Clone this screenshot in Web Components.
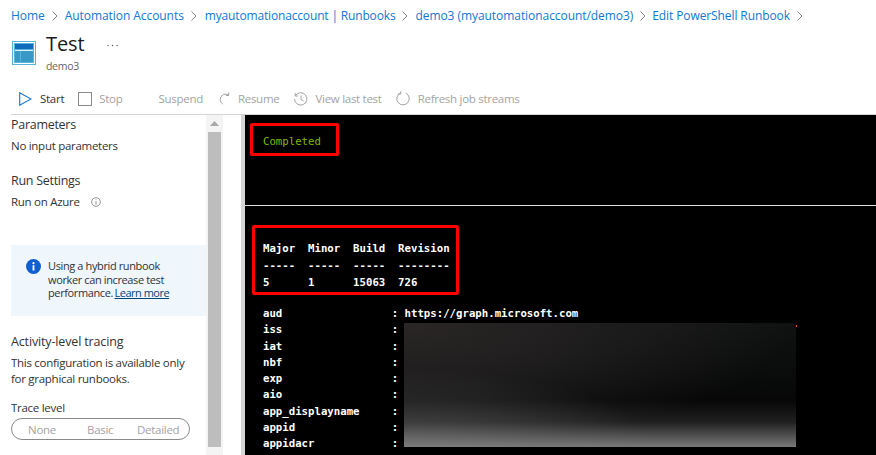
<!DOCTYPE html>
<html><head><meta charset="utf-8"><style>
html,body{margin:0;height:455px;overflow:hidden;background:#fff}
body{font-family:"Open Sans","Noto Sans",sans-serif;display:flex;flex-direction:column}
</style></head><body>
<az-breadcrumb></az-breadcrumb>
<az-title></az-title>
<az-toolbar></az-toolbar>
<div style="display:flex;flex:1;min-height:0">
<az-side></az-side>
<az-term></az-term>
</div>
<script>
const def=(n,h)=>customElements.define(n,class extends HTMLElement{constructor(){super();this.attachShadow({mode:'open'}).innerHTML=h}});
const chev='<svg width="6" height="10" viewBox="0 0 6 10"><path d="M.5.5 5 5 .5 9.5" fill="none" stroke="#777" stroke-width=".9"/></svg>';
def('az-breadcrumb',`<style>:host{display:flex;align-items:center;height:31px;padding-left:11px;box-sizing:border-box;font-size:12px;letter-spacing:-.06px;color:#0f78d4;gap:7px;white-space:nowrap}
.m{letter-spacing:-.16px;margin-left:1px}.e{margin-left:-1px;letter-spacing:-.1px}</style>
<span>Home</span>${chev}<span>Automation Accounts</span>${chev}<span class="m">myautomationaccount | Runbooks</span>${chev}<span>demo3 (myautomationaccount/demo3)</span>${chev}<span class="e">Edit PowerShell Runbook</span>${chev}`);
def('az-title',`<style>:host{display:flex;height:45px;padding-left:12px;box-sizing:border-box;white-space:nowrap}
svg.i{margin:10px 8px 0 0}.t{font-size:20px;line-height:25px;color:#1b1b1b;letter-spacing:-.1px}.s{font-size:10.500px;color:#666;line-height:14px;margin-top:3px;letter-spacing:-.3px}
.d{margin:13px 0 0 22px}</style>
<svg class="i" width="26" height="24" viewBox="0 0 26 24"><rect width="23" height="23" x=".5" y=".5" fill="#fff" stroke="#59b4d9"/><rect x="2" y="2" width="20" height="20" fill="#59b4d9"/><rect x="3" y="3" width="18" height="5" fill="#0f6cbd"/><rect x="3" y="9" width="18" height="1" fill="#fff" opacity=".8"/><rect x="3" y="10" width="5" height="11" fill="#3999c6"/><rect x="9" y="10" width="12" height="11" fill="#3999c6"/></svg>
<div><div class="t">Test</div><div class="s">demo3</div></div>
<svg class="d" width="11" height="3" viewBox="0 0 11 3"><circle cx="1" cy="1.5" r=".7" fill="#555"/><circle cx="5.5" cy="1.5" r=".7" fill="#555"/><circle cx="10" cy="1.5" r=".7" fill="#555"/></svg>`);
def('az-toolbar',`<style>:host{display:flex;align-items:center;height:39px;margin-left:11px;border-bottom:1px solid #d6d6d6;box-sizing:border-box;font-size:11.500px;letter-spacing:-.28px;color:#a3a3a3;white-space:nowrap;padding-top:7px}
span{display:inline-block}svg{flex:none}</style>
<svg style="margin:0 8px 0 8px" width="13" height="14" viewBox="0 0 13 14"><path d="M.7.8 12 7 .7 13.2Z" fill="none" stroke="#0f78d4" stroke-width="1.1"/></svg><span style="color:#333">Start</span>
<svg style="margin:0 7px 0 14px" width="14" height="14" viewBox="0 0 14 14"><rect x=".5" y=".5" width="13" height="13" fill="none" stroke="#8a8a8a"/></svg><span>Stop</span>
<span style="margin-left:36px">Suspend</span>
<svg style="margin:0 6px 0 16px" width="13" height="14" viewBox="0 0 13 14"><path d="M10 3.200A5.500 5.500 0 0 0 1.200 7.500c0 1.900 1 3.600 2.600 4.600M9.700.5v3H6.800" fill="none" stroke="#a3a3a3"/></svg><span>Resume</span>
<svg style="margin:0 7px 0 14px" width="15" height="14" viewBox="0 0 15 14"><path d="M2.500 3.500A6.200 6.200 0 1 1 1.500 7M2.200 1v3h3M8 3.500V7.500l2.500 1.500" fill="none" stroke="#a3a3a3"/></svg><span>View last test</span>
<svg style="margin:0 7px 0 14px" width="15" height="15" viewBox="0 0 15 15"><path d="M10 2.200A6.200 6.200 0 1 1 4.500 2M4.800 .3v2.700H2" fill="none" stroke="#a3a3a3"/></svg><span>Refresh job streams</span>`);
def('az-side',`<style>:host{display:flex;width:245px;flex:none;box-sizing:border-box;border-right:4px solid #d6d6d6;padding-left:11px;font-size:11.500px;letter-spacing:-.28px;color:#333;white-space:nowrap}
.c{width:195px;overflow:hidden}
.h{line-height:18px;color:#333;font-size:12.500px}.p{line-height:17px}
.note{background:#eff6fc;height:71px;margin-top:35px;display:flex;padding:14px 0 0 15px;box-sizing:border-box;font-size:11px;letter-spacing:-.38px;line-height:13.500px}
.note svg{margin-right:7px;flex:none}
a{color:#004578;text-decoration:underline;letter-spacing:-.5px;margin-left:-1px}
.sb{width:17px;background:#f4f4f4;flex:none;height:100%;padding:0 2px;box-sizing:border-box;display:flex;flex-direction:column;align-items:center}
.th{width:13px;height:315px;background:#bdbdbd}
.pill{position:relative;width:179px;height:22px;border:1px solid #8a8a8a;border-radius:11px;display:flex;align-items:center;box-sizing:border-box;color:#a3a3a3;margin-top:2px}
.pill span{position:absolute}
</style>
<div class="c">
<div class="h" style="margin-top:1px">Parameters</div>
<div class="p" style="margin-top:3px">No input parameters</div>
<div class="h" style="margin-top:18px">Run Settings</div>
<div class="p" style="margin-top:3px;display:flex;align-items:center">Run on Azure<svg style="margin-left:11px" width="10" height="10" viewBox="0 0 11 11"><circle cx="5.500" cy="5.500" r="4.800" fill="none" stroke="#8a8a8a"/><path d="M5.500 4.500V8.500M5.500 2.500v1" stroke="#8a8a8a"/></svg></div>
<div class="note"><svg width="15" height="15" viewBox="0 0 15 15"><circle cx="7.500" cy="7.500" r="7.500" fill="#0f5fd0"/><rect x="6.600" y="6.200" width="1.800" height="5.300" fill="#fff"/><circle cx="7.500" cy="4.200" r="1.100" fill="#fff"/></svg><div>Using a hybrid runbook<br>worker can increase test<br>performance. <a>Learn more</a></div></div>
<div class="h" style="margin-top:17px;letter-spacing:-.15px">Activity-level tracing</div>
<div class="p" style="margin-top:4px;line-height:16px">This configuration is available only<br>for graphical runbooks.</div>
<div class="p" style="margin-top:12px">Trace level</div>
<div class="pill"><span style="left:16px">None</span><span style="left:75px">Basic</span><span style="left:125px">Detailed</span></div>
</div>
<div class="sb"><svg style="margin:6px 0 6px" width="9" height="5" viewBox="0 0 9 5"><path d="M4.500 0 9 5H0Z" fill="#a8a8a8"/></svg><div class="th"></div></div>`);
def('az-term',`<style>:host{display:block;flex:1;background:#000;position:relative;overflow:hidden;font-family:"DejaVu Sans Mono","Liberation Mono",monospace;font-size:10.700px;color:#fff}
.top{border-bottom:1px solid #ddd;padding:18px 0 0 18px;height:72px;color:#7fba00;line-height:17px}
.tbl{padding:34px 0 0 18px;font-weight:700;line-height:17px;white-space:pre}
.tok{padding:15px 0 0 18px;font-weight:700;line-height:16.250px;white-space:pre}
.r{position:absolute;border:3.500px solid #f00;border-radius:2px;box-sizing:border-box}
.blur{position:absolute;left:159px;top:208px;width:392px;height:124px;background:
linear-gradient(to bottom,rgba(130,130,130,0) 62%,rgba(125,125,125,.22) 80%,rgba(130,130,130,.92) 100%),
radial-gradient(ellipse at 0 100%,rgba(90,90,90,.55) 0,rgba(60,60,60,0) 45%),
radial-gradient(ellipse at 0 0,#2a2626 0,rgba(34,32,32,.8) 35%,rgba(0,0,0,0) 70%),
linear-gradient(#101212,#060606 70%)}
.dot{position:absolute;left:551px;top:210px;width:1px;height:2px;background:#e8661a}
</style>
<div class="top">Completed</div>
<div class="tbl">Major  Minor  Build  Revision
-----  -----  -----  --------
5      1      15063  726</div>
<div class="tok">aud                 : https://graph.microsoft.com
iss                 :
iat                 :
nbf                 :
exp                 :
aio                 :
app_displayname     :
appid               :
appidacr            :</div>
<div class="blur"></div><div class="dot"></div>
<div class="r" style="left:5px;top:8px;width:89px;height:33px"></div>
<div class="r" style="left:7px;top:110px;width:207px;height:70px"></div>`);
</script>
</body></html>
